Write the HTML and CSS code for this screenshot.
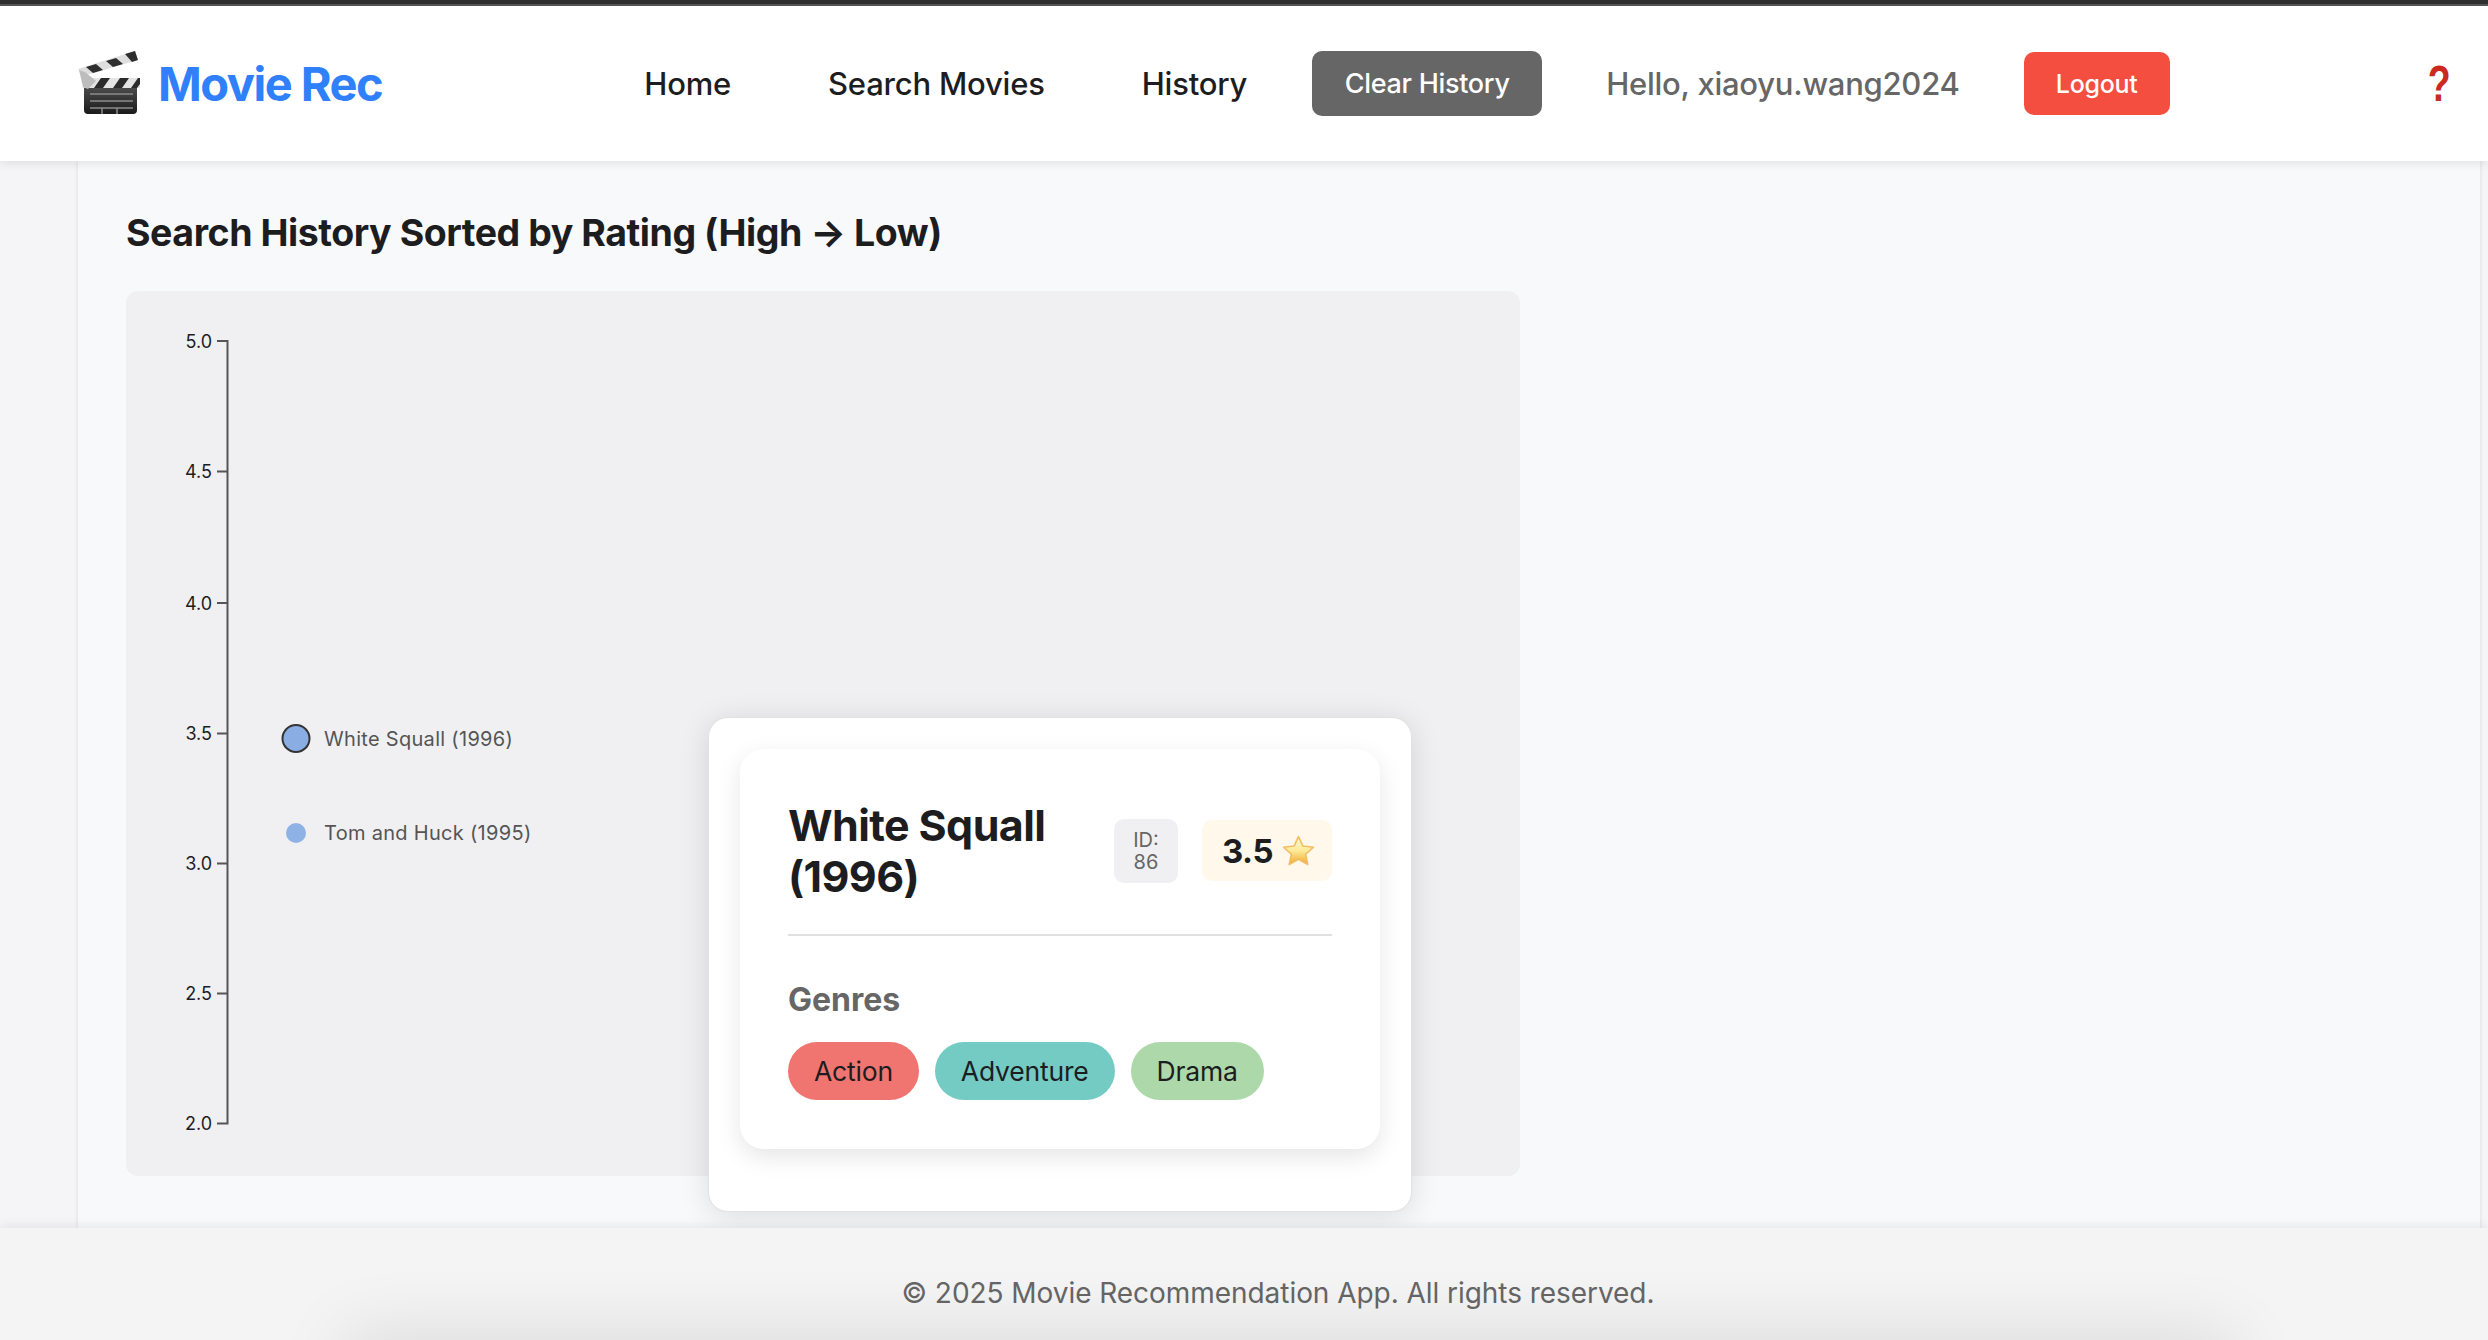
FILE: index.html
```html
<!DOCTYPE html>
<html>
	<head>
		<title>Movie Rec - History</title>
		<link rel="stylesheet" href="styles.css">
	</head>
	<body>
	<header class="site-header">
		<a class="logo">
			<svg class="logo-icon" viewBox="0 0 62 63" width="62" height="63">
				<defs>
					<linearGradient id="board" x1="0" y1="0" x2="0" y2="1">
						<stop offset="0" stop-color="#4c4c4c"/>
						<stop offset="1" stop-color="#1a1a1a"/>
					</linearGradient>
				</defs>
				<path d="M6 36h53v23q0 4-4 4H10q-4 0-4-4z" fill="url(#board)"/>
				<path d="M4 37h58v-10H10z" fill="#e4e4e4"/>
				<path d="M16 37l7-10h9l-7 10zM35 37l7-10h9l-7 10zM53 37l7-10h2v6l-3 4z" fill="#2b2b2b"/>
				<path d="M0 18L57 0l3 9L5 25z" fill="#dedede"/>
				<path d="M8 16l10-3 7 6-10 3zM28 10l10-3 7 6-10 3zM47 3l10-3 3 9-6 2z" fill="#2e2e2e"/>
				<path d="M1 19l6 2 11 9-8 8-5-2z" fill="#bdbdbd"/>
				<path d="M12 43h43M12 50h43M12 57h43" stroke="#8a8a8a" stroke-width="1.500"/>
				<path d="M24 57v6M39 57v6" stroke="#8a8a8a" stroke-width="1.500"/>
			</svg>
			<span class="logo-text">Movie Rec</span>
		</a>
		<nav class="nav">
			<a class="nav-link">Home</a>
			<a class="nav-link">Search Movies</a>
			<a class="nav-link">History</a>
			<button class="btn btn-clear">Clear History</button>
			<span class="hello">Hello, xiaoyu.wang2024</span>
			<button class="btn btn-logout">Logout</button>
		</nav>
		<span class="help">?</span>
	</header>

	<main class="content">
		<h2 class="page-title">Search History Sorted by Rating (High → Low)</h2>
		<div class="chart">
			<svg class="chart-svg" width="1394" height="885" viewBox="0 0 1394 885">
				<g class="axis">
					<path d="M91 50H101.500V832.500H91" fill="none"/>
					<path d="M91 180.500H101.500M91 312H101.500M91 442.500H101.500M91 572.500H101.500M91 702.500H101.500" fill="none"/>
				</g>
				<g class="tick-labels">
					<text x="86" y="57">5.0</text>
					<text x="86" y="187">4.5</text>
					<text x="86" y="319">4.0</text>
					<text x="86" y="449">3.5</text>
					<text x="86" y="579">3.0</text>
					<text x="86" y="709">2.5</text>
					<text x="86" y="839">2.0</text>
				</g>
				<circle class="dot-active" cx="170" cy="447.500" r="13.500"/>
				<text class="dot-label" x="198" y="455">White Squall (1996)</text>
				<circle class="dot" cx="170" cy="542" r="10"/>
				<text class="dot-label" x="198" y="549">Tom and Huck (1995)</text>
			</svg>

			<div class="tooltip">
				<div class="movie-card">
					<div class="movie-head">
						<h3 class="movie-title">White Squall (1996)</h3>
						<span class="movie-id">ID: 86</span>
						<span class="movie-rating">3.5
							<svg viewBox="0 0 32 30" width="33" height="31">
								<defs>
									<linearGradient id="star" x1="0" y1="0" x2="0" y2="1">
										<stop offset="0" stop-color="#fff8d8"/>
										<stop offset="0.5" stop-color="#fdeb9a"/>
										<stop offset="1" stop-color="#f0a92e"/>
									</linearGradient>
								</defs>
								<path d="M16 1.500l4.300 9.200 10.200 1.100-7.600 6.800 2.100 10-9-5.100-9 5.100 2.100-10-7.600-6.800 10.200-1.100z" fill="url(#star)" stroke="#f3bd63" stroke-width="1.500" stroke-linejoin="round"/>
							</svg>
						</span>
					</div>
					<h4 class="genres-title">Genres</h4>
					<div class="genres">
						<span class="genre genre-action">Action</span>
						<span class="genre genre-adventure">Adventure</span>
						<span class="genre genre-drama">Drama</span>
					</div>
				</div>
			</div>
		</div>
	</main>

	<footer class="site-footer">
		<p>© 2025 Movie Recommendation App. All rights reserved.</p>
	</footer>
	</body>
</html>
```

FILE: styles.css
```css
html, body {
	height: 100%;
}
body {
	background-color: #f5f5f7;
	color: #1d1d1f;
	display: flex;
	flex-direction: column;
	font-family: Inter, "Liberation Sans", sans-serif;
	height: 1340px;
	margin: 0;
	overflow: hidden;
}
.site-header {
	align-items: center;
	background-color: #fff;
	border-top: 4px solid #2f2f2f;
	box-shadow: 0 2px 10px rgba(0, 0, 0, 0.1);
	box-sizing: border-box;
	display: flex;
	flex: none;
	height: 161px;
	padding: 2px 0 0 78px;
	position: relative;
	z-index: 2;
}
.site-header::before {
	background-color: #555;
	content: "";
	height: 2px;
	left: 0;
	position: absolute;
	right: 0;
	top: 0;
}
.logo {
	align-items: center;
	display: flex;
	gap: 18px;
}
.logo-icon {
	margin-top: -2px;
}
.logo-text {
	color: #2f80fa;
	font-size: 47px;
	font-weight: 700;
	letter-spacing: -1.5px;
}
.nav {
	align-items: center;
	display: flex;
	gap: 64px;
	margin-left: 262px;
}
.nav-link {
	color: #1d1d1f;
	font-size: 31px;
	font-weight: 500;
	letter-spacing: -0.2px;
	margin-right: 33px;
}
.nav-link:nth-child(3) {
	margin-right: 1px;
}
.btn {
	border: none;
	border-radius: 10px;
	color: #fff;
	font-family: inherit;
	font-weight: 500;
}
.btn-clear {
	background-color: #666;
	font-size: 27px;
	height: 65px;
	letter-spacing: -0.3px;
	width: 230px;
}
.btn-logout {
	background-color: #f44e40;
	font-size: 25px;
	height: 63px;
	letter-spacing: -0.3px;
	width: 146px;
}
.hello {
	color: #666;
	font-size: 31px;
	font-weight: 500;
	letter-spacing: -0.25px;
}
.help {
	color: #cc2a1e;
	display: inline-block;
	font-family: "Liberation Sans", sans-serif;
	font-size: 50px;
	font-weight: 700;
	margin-left: auto;
	margin-right: 33px;
	transform: scaleX(0.75);
}

.content {
	background-color: #f8f9fb;
	box-shadow: 0 0 4px rgba(0, 0, 0, 0.12);
	flex: 1;
	margin: 0 8px 0 78px;
	padding: 46px 48px 0;
}
.page-title {
	font-size: 37.500px;
	font-weight: 700;
	letter-spacing: -0.46px;
	line-height: 52px;
	margin: 0 0 32px;
}
.chart {
	background-color: #f0f0f2;
	border-radius: 12px;
	height: 885px;
	position: relative;
	width: 1394px;
}
.chart-svg {
	display: block;
}
.axis path {
	stroke: #555;
	stroke-width: 2;
}
.tick-labels text {
	fill: #1d1d1f;
	font-size: 18px;
	text-anchor: end;
}
.dot-label {
	fill: #555;
	font-size: 20px;
	letter-spacing: 0.3px;
}
.dot {
	fill: #8fb2e6;
}
.dot-active {
	fill: #8aaee3;
	stroke: #333;
	stroke-width: 2;
}

.tooltip {
	background-color: #fff;
	border: 1px solid #e2e2e2;
	border-radius: 20px;
	box-shadow: 0 4px 30px rgba(0, 0, 0, 0.12);
	box-sizing: border-box;
	height: 495px;
	left: 582px;
	padding: 31px;
	position: absolute;
	top: 426px;
	width: 704px;
	z-index: 1;
}
.movie-card {
	background-color: #fff;
	border-radius: 24px;
	box-shadow: 0 8px 24px rgba(0, 0, 0, 0.1);
	box-sizing: border-box;
	height: 400px;
	padding: 48px;
}
.movie-head {
	align-items: center;
	border-bottom: 2px solid #e0e0e0;
	box-sizing: border-box;
	display: flex;
	gap: 24px;
	height: 139px;
	padding-bottom: 30px;
}
.movie-title {
	flex: 1;
	font-size: 43px;
	font-weight: 700;
	letter-spacing: -0.6px;
	line-height: 51px;
	margin: 0;
}
.movie-id {
	background-color: #f0f0f2;
	border-radius: 10px;
	box-sizing: border-box;
	color: #666;
	font-size: 20px;
	line-height: 22px;
	padding: 10px 14px;
	text-align: center;
	width: 64px;
}
.movie-rating {
	align-items: center;
	background-color: #fff8eb;
	border-radius: 10px;
	box-sizing: border-box;
	display: flex;
	font-size: 33px;
	font-weight: 700;
	gap: 9px;
	height: 61px;
	letter-spacing: -0.5px;
	padding-left: 20px;
	width: 130px;
}
.genres-title {
	color: #666;
	font-size: 32px;
	font-weight: 700;
	line-height: 40px;
	margin: 44px 0 22px;
}
.genres {
	display: flex;
	gap: 16px;
}
.genre {
	align-items: center;
	border-radius: 40px;
	color: #1d1d1f;
	display: flex;
	font-size: 26.500px;
	height: 58px;
	letter-spacing: -0.2px;
	padding: 0 26px;
}
.genre-action {
	background-color: #f0746f;
}
.genre-adventure {
	background-color: #73cbc3;
}
.genre-drama {
	background-color: #add8a9;
}

.site-footer {
	background-color: #f4f4f4;
	box-shadow: 0 -2px 10px rgba(0, 0, 0, 0.08);
	color: #666;
	flex: none;
	font-size: 28px;
	height: 112px;
	letter-spacing: -0.05px;
	position: relative;
	text-align: center;
	z-index: 2;
}
.site-footer::after {
	box-shadow: 0 0 70px 20px rgba(0, 0, 0, 0.1);
	content: "";
	height: 40px;
	left: 365px;
	position: absolute;
	right: 275px;
	top: 125px;
}
.site-footer p {
	margin: 0;
	padding: 48px 0 0 68px;
}
```
